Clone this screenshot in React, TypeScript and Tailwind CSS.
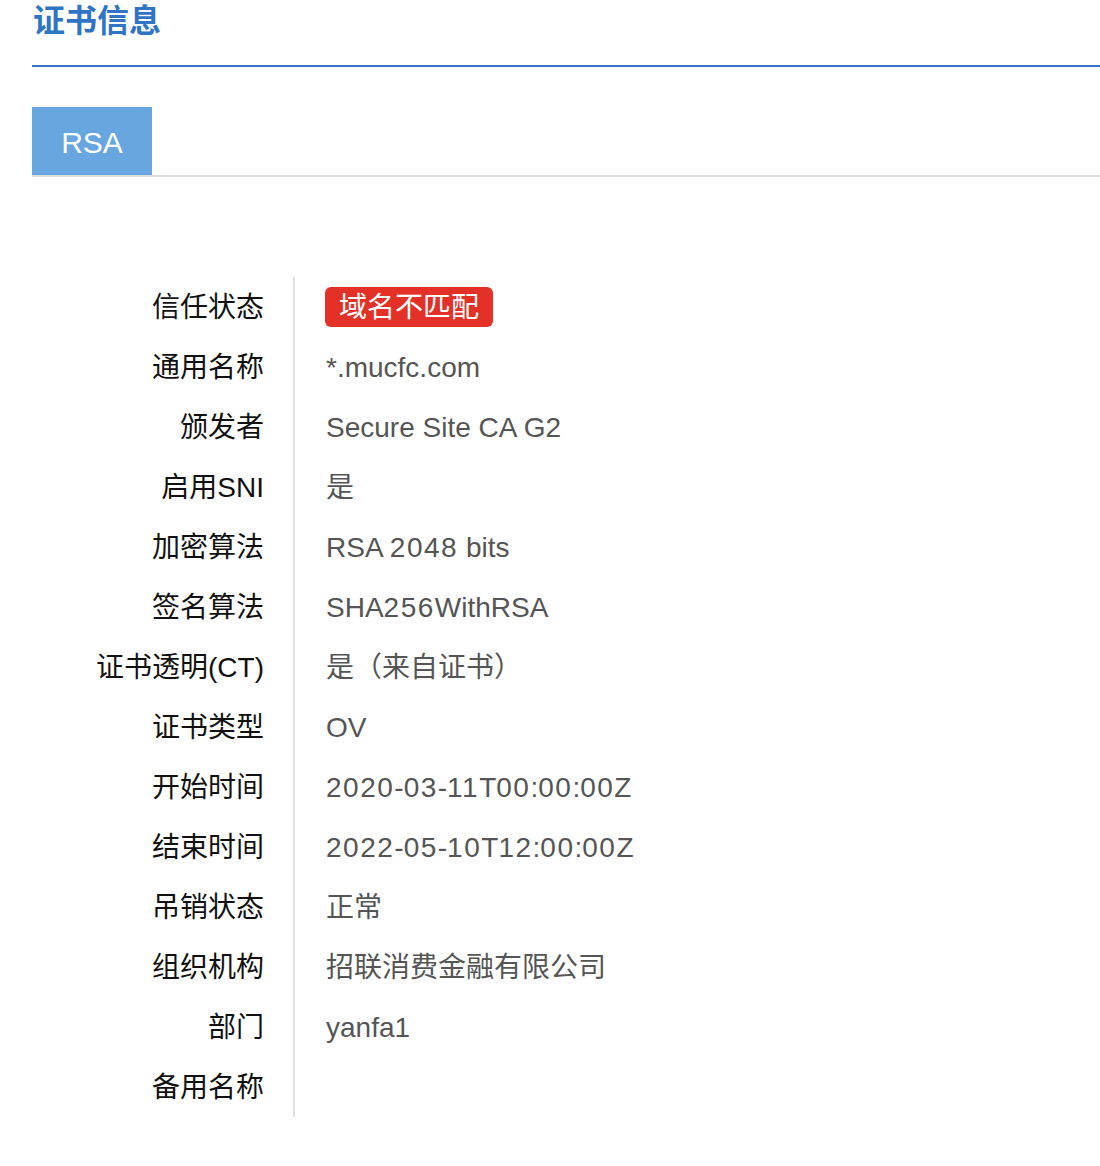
import React from "react";

const rows: { label: string; value?: string; badge?: string }[] = [
  { label: "信任状态", badge: "域名不匹配" },
  { label: "通用名称", value: "*.mucfc.com" },
  { label: "颁发者", value: "Secure Site CA G2" },
  { label: "启用SNI", value: "是" },
  { label: "加密算法", value: "RSA 2048 bits" },
  { label: "签名算法", value: "SHA256WithRSA" },
  { label: "证书透明(CT)", value: "是（来自证书）" },
  { label: "证书类型", value: "OV" },
  { label: "开始时间", value: "2020-03-11T00:00:00Z" },
  { label: "结束时间", value: "2022-05-10T12:00:00Z" },
  { label: "吊销状态", value: "正常" },
  { label: "组织机构", value: "招联消费金融有限公司" },
  { label: "部门", value: "yanfa1" },
  { label: "备用名称", value: "" },
];

function Wide({ text }: { text: string }) {
  const parts = text.split(/(\d+)/);
  return (
    <>
      {parts.map((p, i) =>
        /^\d+$/.test(p) ? (
          <span key={i} className="tracking-[1.5px]">
            {p}
          </span>
        ) : (
          <span key={i}>{p}</span>
        )
      )}
    </>
  );
}

export default function App() {
  return (
    <div
      className="w-[1100px] h-[1166px] bg-white pl-[32px]"
      style={{ fontFamily: '"Liberation Sans", "Noto Sans CJK SC", sans-serif' }}
    >
      <div className="border-b-2 border-[#3175c6] pb-[23px]">
        <div className="pl-[1px] text-[32px] font-bold leading-[42px] text-[#2f74c5]">证书信息</div>
      </div>
      <div className="mt-[40px] flex border-b-2 border-[#dcdcdc]">
        <div className="flex h-[68px] w-[120px] items-center justify-center bg-[#67a6de] pt-[2px] text-[30px] text-white">
          RSA
        </div>
      </div>
      <div className="mt-[100px] flex flex-col">
        {rows.map((r) => (
          <div key={r.label} className="flex h-[60px]">
            <div className="flex w-[261px] items-center justify-end pr-[29px] pt-[2px] text-[28px] text-[#111]">
              {r.label}
            </div>
            <div
              className={
                r.badge
                  ? "flex flex-1 items-center border-l-2 border-[#e0e0e0] pl-[31px] text-[28px] text-[#555]"
                  : "flex flex-1 items-center border-l-2 border-[#e0e0e0] pl-[31px] pt-[2px] text-[28px] text-[#555]"
              }
            >
              {r.badge ? (
                <span className="-ml-[1px] flex h-[40px] items-center rounded-[6px] bg-[#e43127] px-[14px] pt-[1px] text-white">
                  {r.badge}
                </span>
              ) : (
                <span className="whitespace-pre">
                  <Wide text={r.value || ""} />
                </span>
              )}
            </div>
          </div>
        ))}
      </div>
    </div>
  );
}
